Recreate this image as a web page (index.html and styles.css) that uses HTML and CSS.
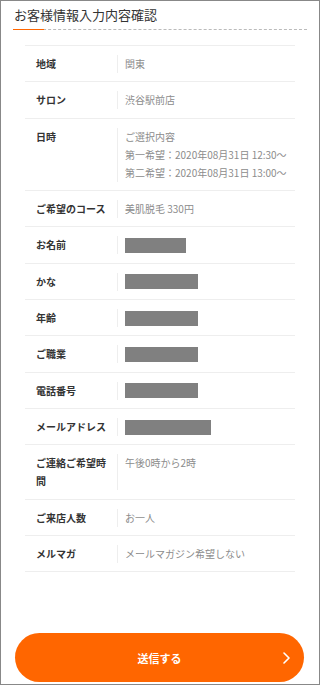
FILE: index.html
```html
<!DOCTYPE html>
<html lang="ja">
<head>
    <meta charset="UTF-8">
    <meta name="viewport" content="width=device-width, initial-scale=1.0">
    <title>お客様情報入力内容確認</title>
    <link rel="stylesheet" href="styles.css">
</head>
<body>
    <div class="page">
        <h1 class="page-title">お客様情報入力内容確認</h1>

        <dl class="confirm">
            <div class="row">
                <dt>地域</dt>
                <dd>関東</dd>
            </div>
            <div class="row">
                <dt>サロン</dt>
                <dd>渋谷駅前店</dd>
            </div>
            <div class="row">
                <dt>日時</dt>
                <dd>
                    <span class="line">ご選択内容</span>
                    <span class="line">第一希望：2020年08月31日 12:30〜</span>
                    <span class="line">第二希望：2020年08月31日 13:00〜</span>
                </dd>
            </div>
            <div class="row">
                <dt>ご希望のコース</dt>
                <dd>美肌脱毛 330円</dd>
            </div>
            <div class="row">
                <dt>お名前</dt>
                <dd><span class="mask mask-s"></span></dd>
            </div>
            <div class="row">
                <dt>かな</dt>
                <dd><span class="mask"></span></dd>
            </div>
            <div class="row">
                <dt>年齢</dt>
                <dd><span class="mask"></span></dd>
            </div>
            <div class="row">
                <dt>ご職業</dt>
                <dd><span class="mask"></span></dd>
            </div>
            <div class="row">
                <dt>電話番号</dt>
                <dd><span class="mask"></span></dd>
            </div>
            <div class="row">
                <dt>メールアドレス</dt>
                <dd><span class="mask mask-l"></span></dd>
            </div>
            <div class="row">
                <dt>ご連絡ご希望時間</dt>
                <dd>午後0時から2時</dd>
            </div>
            <div class="row">
                <dt>ご来店人数</dt>
                <dd>お一人</dd>
            </div>
            <div class="row">
                <dt>メルマガ</dt>
                <dd>メールマガジン希望しない</dd>
            </div>
        </dl>

        <button type="button" class="submit">
            <span class="submit-label">送信する</span>
            <svg class="submit-arrow" width="7" height="12" viewBox="0 0 7 12">
                <path d="M1 1 L6 6 L1 11" fill="none" stroke="#fff" stroke-width="1.6" stroke-linecap="round" stroke-linejoin="round"/>
            </svg>
        </button>
    </div>
</body>
</html>
```

FILE: styles.css
```css
html, body { margin: 0; padding: 0; }
body { font-family: "Noto Sans CJK JP", "Noto Sans", sans-serif; color: #333; background: #fff; }

.page { box-sizing: border-box; height: 685px; border: 1px solid #888; display: flex; flex-direction: column; }

.page-title { position: relative; margin: 0 12px 0 12px; padding: 4px 0 4px 1px; font-size: 13px; line-height: 20px; font-weight: normal; color: #333; border-bottom: 1px dashed #bbb; }
.page-title::after { content: ""; position: absolute; left: 0; bottom: -1px; width: 31px; height: 1px; background: #f60; }

.confirm { margin: 15px 24px 0; padding: 0; border-top: 1px solid #eee; }
.row { display: flex; padding: 9px 0 8.35px; border-bottom: 1px solid #eee; font-size: 10px; line-height: 18px; }
.row dt { box-sizing: border-box; flex: 0 0 92px; padding: 0 9px 0 11px; font-weight: bold; color: #333; }
.row dd { flex: 1; margin: 0; padding-left: 7px; border-left: 1px solid #eee; color: #8c8c8c; }
.line { display: block; white-space: nowrap; }

.mask { display: block; width: 73px; height: 15px; margin: 1.5px 0; background: #808080; }
.mask-s { width: 61px; }
.mask-l { width: 86px; }

.submit { margin: auto 15px 2px 14px; height: 49px; border: none; border-radius: 25px; background: #f60; color: #fff; font-family: inherit; font-size: 11px; font-weight: bold; display: grid; grid-template-columns: 1fr auto 1fr; align-items: center; padding: 0 14px; cursor: pointer; }
.submit-label { grid-column: 2; }
.submit-arrow { grid-column: 3; justify-self: end; }
```
